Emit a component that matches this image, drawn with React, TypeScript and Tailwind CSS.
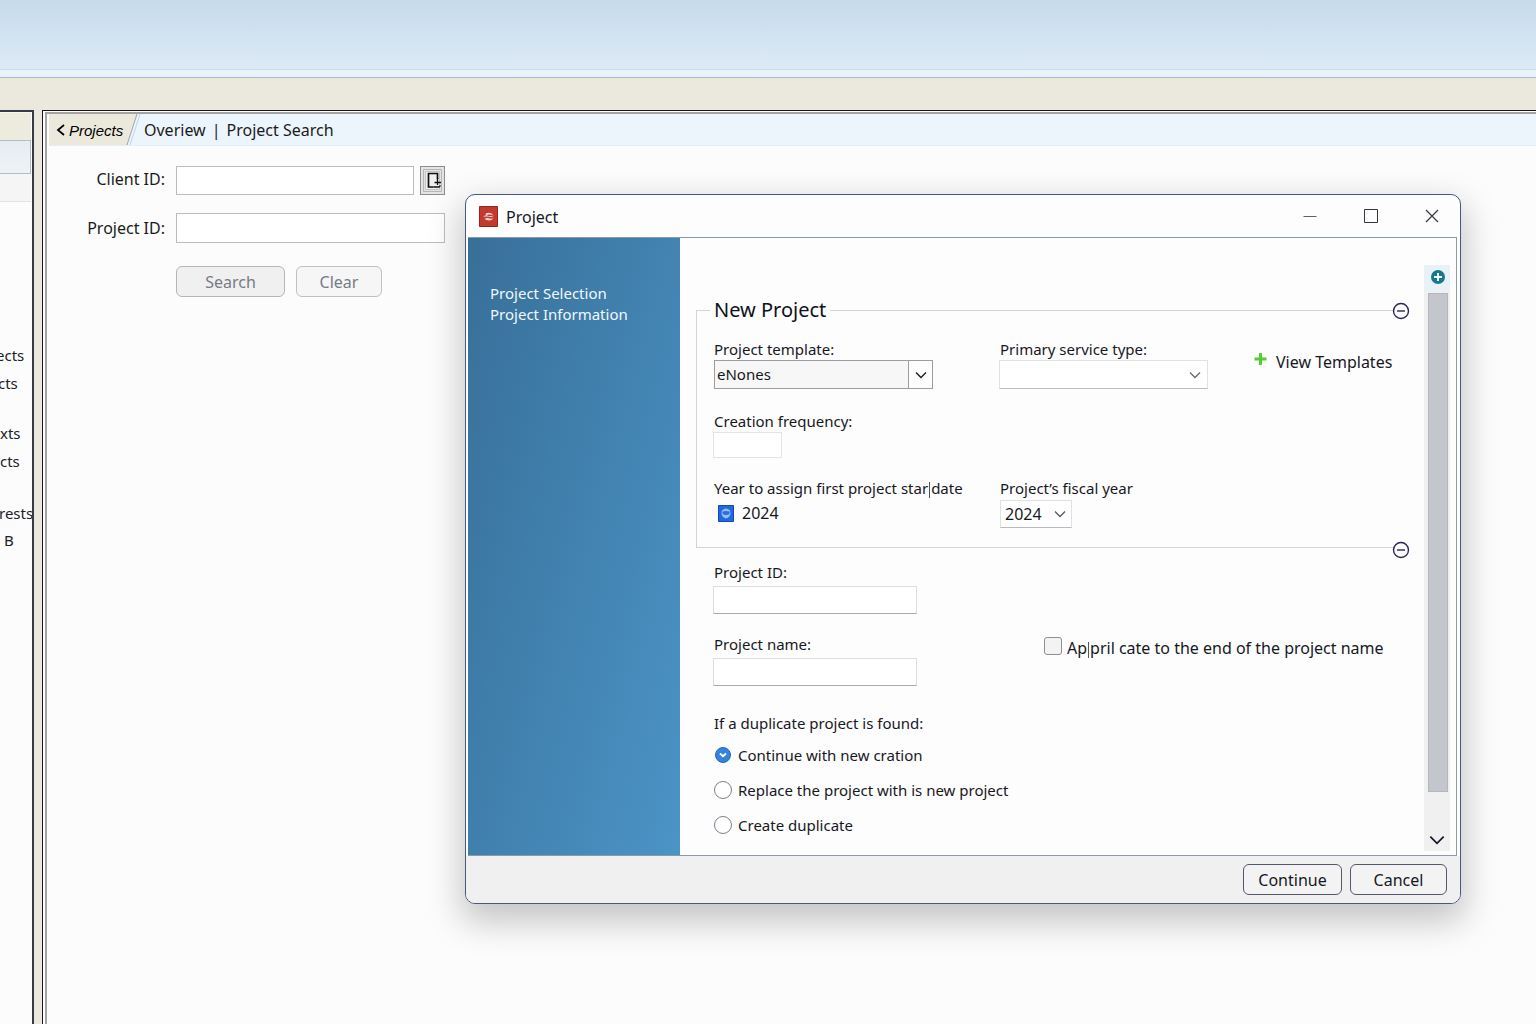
import { useState } from "react";
import type { ReactNode } from "react";

function Chevron({ className, size = 12 }: { className: string; size?: number }) {
  return (
    <svg className={className} width={size} height={size} viewBox="0 0 12 12" fill="none" stroke="currentColor" strokeWidth="1.3" aria-hidden="true">
      <path d="M1 3.5 6 8.500 11 3.500" />
    </svg>
  );
}

const sideItems = [
  { text: "ects", cls: "mt-[143px] -ml-1" },
  { text: "cts", cls: "mt-2 -ml-0.5" },
  { text: "xts", cls: "mt-[30px]" },
  { text: "cts", cls: "mt-2" },
  { text: "rests", cls: "mt-8 -ml-px" },
  { text: "B", cls: "mt-[7px] ml-1" },
];

function SidePanel() {
  return (
    <aside className="flex w-[34px] shrink-0 flex-col overflow-hidden border-t-2 border-r-2 border-[#363b45] bg-[#fcfcfc]">
      <div className="mr-px h-7 shrink-0 border-t border-[#f8f7ee] bg-[#ecebde]" />
      <div className="mr-px h-[34px] shrink-0 border border-l-0 border-[#b3bdc6] bg-linear-to-b from-[#e6edf2] to-[#edf2f6]" />
      <div className="mr-px h-7 shrink-0 border-b border-[#e2e3e5] bg-[#f5f5f6]" />
      <ul className="text-[15px] text-[#20222a]">
        {sideItems.map((item, i) => (
          <li key={i} className={item.cls + " h-5 whitespace-nowrap leading-5"}>
            {item.text}
          </li>
        ))}
      </ul>
    </aside>
  );
}

function SearchPanel() {
  return (
    <main className="min-w-0 flex-1 border-t border-l border-[#16181d] bg-white pt-px pl-0.5">
      <div className="h-full border-t-2 border-l-2 border-[#a3a3a6] bg-[#fcfcfc] pl-0.5">
        <nav className="flex h-8 border-b border-[#e3eff7] bg-[#edf5fc]">
          <a href="#projects" className="relative flex w-[92px] items-center pl-1 text-black">
            <svg className="absolute inset-0 h-full w-full" viewBox="0 0 92 32" preserveAspectRatio="none" aria-hidden="true">
              <path d="M0 0H88L78 32H0Z" fill="#ebe9db" />
              <path d="M88 0 78 32" stroke="#9aa3ab" strokeWidth="1" />
              <path d="M91 0 81 32" stroke="#bcd3ea" strokeWidth="1" />
            </svg>
            <svg className="relative mt-px mr-1 ml-[3px]" width="9" height="12" viewBox="0 0 9 12" fill="none" stroke="#000" strokeWidth="1.8" aria-hidden="true">
              <path d="M8 1 2 6l6 5" />
            </svg>
            <span className="relative pt-1 font-['Liberation_Sans',sans-serif] text-[15px] italic">Projects</span>
          </a>
          <a href="#overview" className="ml-[3px] flex items-center text-[#1a1b20]">Overiew</a>
          <span className="mx-1.5 flex items-center text-[#1a1b20]">|</span>
          <a href="#search" className="flex items-center text-[#1a1b20]">Project Search</a>
        </nav>
        <form className="grid w-[396px] grid-cols-[117px_1fr] gap-x-2.5 pt-5 text-[#1a1b20]" onSubmit={(e) => e.preventDefault()}>
          <label htmlFor="client" className="mr-px text-right leading-[27px]">Client ID:</label>
          <div className="flex min-w-0 gap-1.5">
            <input id="client" type="text" className="h-[29px] min-w-0 flex-1 border border-[#bcbcbe] bg-white px-2" />
            <button type="button" aria-label="Look up client" className="flex h-[29px] w-[25px] items-center justify-center border border-[#8d8d8f] bg-[#e4e4e4] p-0.5">
              <svg width="19" height="23" viewBox="0 0 19 23" fill="none" aria-hidden="true">
                <path d="M.5.5h18v22H.5z" stroke="#b5b5b6" />
                <path d="M2.5 2.5h14v18h-14z" stroke="#c4c4c5" fill="#f1f1f1" />
                <path d="M14.500 10V4.500h-9v13.500h5" stroke="#111" strokeWidth="1.700" />
                <path d="M14.500 9v7M11.500 13.500h6.500M10.500 18h5.500l1.500-1.500" stroke="#111" strokeWidth="1.300" />
              </svg>
            </button>
          </div>
          <label htmlFor="pid" className="mt-[18px] mr-px text-right leading-[30px]">Project ID:</label>
          <input id="pid" type="text" className="mt-[18px] h-[30px] w-full min-w-0 border border-[#bcbcbe] bg-white px-2" />
          <div className="col-start-2 mt-[23px] flex gap-[11px] text-[#777b84]">
            <button type="submit" className="h-[31px] w-[109px] rounded-md border border-[#b4b5b8] bg-[#f0f0f0]">Search</button>
            <button type="reset" className="h-[31px] w-[86px] rounded-md border border-[#bfc0c3] bg-[#f6f6f6]">Clear</button>
          </div>
        </form>
      </div>
    </main>
  );
}

function Field({ id, label, className = "", children }: { id: string; label: string; className?: string; children: ReactNode }) {
  return (
    <div className={className}>
      <label htmlFor={id} className="block leading-5">{label}</label>
      {children}
    </div>
  );
}

function Collapse({ className }: { className: string }) {
  return (
    <button type="button" aria-label="Collapse section" className={className + " absolute right-[-17px] h-[18px] w-[18px]"}>
      <svg width="18" height="18" viewBox="0 0 18 18" fill="none" stroke="#2b2456" strokeWidth="1.400" aria-hidden="true">
        <circle cx="9" cy="9" r="7.500" />
        <path d="M5 9h8" />
      </svg>
    </button>
  );
}

function Caret() {
  return <span className="mx-px inline-block h-4 w-px bg-[#55565c] align-middle" />;
}

const duplicateChoices = ["Continue with new cration", "Replace the project with is new project", "Create duplicate"];

function ProjectDialog() {
  const [choice, setChoice] = useState(0);
  const lineField = "block border border-[#dcdde0] bg-white px-2";
  return (
    <section
      role="dialog"
      aria-label="Project"
      className="absolute top-[194px] right-[75px] left-[465px] overflow-hidden rounded-[10px] border border-[#46597f] bg-[#fdfdfd] text-[15px] text-[#17181d] shadow-[0_14px_34px_4px_rgba(0,0,0,0.22)]"
    >
      <header className="flex h-[42px] items-center pl-[13px]">
        <svg width="19" height="21" viewBox="0 0 19 21" aria-hidden="true">
          <path d="M.5.5h18v20H.5z" fill="#c13a2f" stroke="#9f211b" />
          <path d="M6.500 7.800Q9.500 5.500 13 7.800l1 1.200-4-.5-3 .8Z M4 10.800q2-2.200 4.500-1.200t6.500 0q-1.500 2-4.500 1.200T4 10.800Z M5.500 12.800q2.500-1.400 4.500-.5t4.500-.3q-1.500 2.600-4.500 2.600t-4.500-1.800Z" fill="#f6d3ce" />
        </svg>
        <h1 className="ml-2 flex-1 pt-0.5 text-base">Project</h1>
        <button type="button" aria-label="Minimize" className="flex w-[61px] justify-center">
          <svg width="14" height="14" viewBox="0 0 14 14" stroke="#5e6069" aria-hidden="true"><path d="M.5 7.500h13" /></svg>
        </button>
        <button type="button" aria-label="Maximize" className="flex w-[61px] justify-center">
          <svg width="14" height="14" viewBox="0 0 14 14" fill="none" stroke="#33353f" aria-hidden="true"><path d="M.5.5h13v13H.5z" /></svg>
        </button>
        <button type="button" aria-label="Close" className="mr-[-2px] flex w-[61px] justify-center">
          <svg width="14" height="14" viewBox="0 0 14 14" stroke="#33353f" strokeWidth="1.200" aria-hidden="true"><path d="m1 1 12 12M13 1 1 13" /></svg>
        </button>
      </header>

      <div className="mr-[3px] ml-0.5 flex border-t border-r border-b border-[#8e99a8]">
        <nav className="w-[212px] shrink-0 bg-linear-[105deg] from-[#386f99] to-[#4b94c6] pt-[45px] pl-[22px] text-[#f2f8fd]">
          <a href="#selection" className="block leading-[21px]">Project Selection</a>
          <a href="#information" className="block leading-[21px]">Project Information</a>
        </nav>

        <form className="min-w-0 flex-1 pt-[58px] pr-[31px] pb-5 pl-4" onSubmit={(e) => e.preventDefault()}>
          <fieldset className="relative border border-r-0 border-[#d3d4d8] pr-0 pb-[19px] pl-[13px]">
            <legend className="px-1 text-xl leading-7 text-[#0f1120]">New Project</legend>
            <Collapse className="top-[-22px]" />
            <Collapse className="bottom-[-12px]" />
            <div className="ml-1 grid grid-cols-[286px_254px_1fr] pt-[15px]">
              <Field id="template" label="Project template:">
                <div className="relative mt-px w-[219px]">
                  <select id="template" className="block h-[29px] w-full appearance-none border border-[#9c9da1] bg-[#f7f7f7] pl-0.5">
                    <option>eNones</option>
                  </select>
                  <span className="pointer-events-none absolute inset-y-px right-px flex w-6 items-center justify-center border-l border-[#9c9da1] bg-[#fdfdfd]">
                    <Chevron className="text-[#17181d]" />
                  </span>
                </div>
              </Field>
              <Field id="service" label="Primary service type:">
                <div className="relative mt-px -ml-px w-[209px]">
                  <select id="service" className="block h-[29px] w-full appearance-none border border-[#e0e1e3] border-b-[#bdbec2] bg-white">
                    <option />
                  </select>
                  <Chevron className="pointer-events-none absolute top-[9px] right-[7px] text-[#686a72]" />
                </div>
              </Field>
              <button type="button" className="mt-[9px] flex h-7 items-center gap-2 self-start text-base">
                <svg width="14" height="14" viewBox="0 0 14 14" className="mb-1.5" aria-hidden="true"><path d="M6.500 1v12M.5 7h12" stroke="#54cf31" strokeWidth="3" /></svg>
                View Templates
              </button>
            </div>
            <Field id="frequency" label="Creation frequency:" className="mt-[22px] ml-1">
              <input id="frequency" type="text" className="mt-px -ml-px block h-[26px] w-[69px] border border-[#e4e4e7] bg-white px-1" />
            </Field>
            <div className="mt-5 ml-1 grid grid-cols-[286px_1fr]">
              <div>
                <p className="h-5 leading-5">Year to assign first project star<Caret />date</p>
                <div className="mt-[3px] ml-1 flex h-6 items-center gap-2 text-base">
                  <svg width="16" height="17" viewBox="0 0 16 17" aria-hidden="true">
                    <path d="M.5.5h15v16H.5z" fill="#2468df" stroke="#1549ae" />
                    <path d="M4 5.500Q8 1.500 12 5.500l.5 3Q12 12.500 8 13.500 4 12.500 3.500 8.500Z" fill="#8fc2fb" />
                    <path d="M4.500 6.500Q8 5.500 11.500 6.500v2.500q-3.500 2-7 0Z" fill="#2b6fdc" />
                  </svg>
                  <span>2024</span>
                </div>
              </div>
              <Field id="fiscal" label="Project’s fiscal year">
                <div className="relative mt-0.5 w-[72px]">
                  <select id="fiscal" className="block h-7 w-full appearance-none border border-[#e0e1e3] border-b-[#b9babf] bg-white pl-1 text-base">
                    <option>2024</option>
                  </select>
                  <Chevron className="pointer-events-none absolute top-2 right-1.5 text-[#555862]" />
                </div>
              </Field>
            </div>
          </fieldset>

          <div className="mt-3.5 ml-[18px] grid grid-cols-[330px_1fr]">
            <Field id="project-id" label="Project ID:" className="col-span-2">
              <input id="project-id" type="text" className={lineField + " mt-1 -ml-px h-7 w-[204px] border-b-[#a9aaae]"} />
            </Field>
            <Field id="project-name" label="Project name:" className="mt-5">
              <input id="project-name" type="text" className={lineField + " mt-1 -ml-px h-7 w-[204px] border-b-[#a9aaae]"} />
            </Field>
            <label className="mt-[22px] flex h-5 items-center gap-[5px] text-base whitespace-nowrap">
              <input type="checkbox" className="h-[18px] w-[18px] shrink-0 appearance-none rounded-[3px] border border-[#8f9096] bg-[#f3f3f3]" />
              <span className="pt-1">Ap<Caret />pril cate to the end of the project name</span>
            </label>
          </div>

          <div role="radiogroup" aria-labelledby="duplicate" className="mt-[27px] ml-[18px]">
            <p id="duplicate" className="leading-5">If a duplicate project is found:</p>
            <div className="mt-3 flex flex-col gap-[15px]">
              {duplicateChoices.map((text, i) => (
                <label key={text} className="flex h-5 items-center gap-1.5">
                  <span className="relative flex h-[18px] w-[18px]">
                    <input
                      type="radio"
                      name="duplicate"
                      checked={choice === i}
                      onChange={() => setChoice(i)}
                      className="h-[18px] w-[18px] appearance-none rounded-full border border-[#7d7f8c] bg-white checked:m-px checked:h-4 checked:w-4 checked:border-[#2467b5] checked:bg-[#3583dc]"
                    />
                    {choice === i && (
                      <svg className="pointer-events-none absolute inset-0" width="18" height="18" viewBox="0 0 18 18" fill="none" stroke="#fff" strokeWidth="1.800" aria-hidden="true">
                        <path d="m6 7.500 3 2.700 3-2.700" />
                      </svg>
                    )}
                  </span>
                  {text}
                </label>
              ))}
            </div>
          </div>
        </form>

        <div className="mt-[27px] mr-1.5 mb-1 flex w-[26px] shrink-0 flex-col items-center bg-[#f0f0f1]">
          <button type="button" aria-label="Scroll up" className="flex h-[26px] w-full items-center justify-center bg-[#e8f1f6]">
            <svg width="14" height="14" viewBox="0 0 14 14" className="mb-0.5 ml-0.5" aria-hidden="true">
              <circle cx="7" cy="7" r="7" fill="#15788f" />
              <path d="M7 3v8M3 7h8" stroke="#fff" strokeWidth="1.800" />
            </svg>
          </button>
          <div className="mt-0.5 ml-px w-5 flex-1 border border-[#b3b6bd] bg-[#c3c6cd]" />
          <button type="button" aria-label="Scroll down" className="mt-9 flex h-[23px] w-full items-center justify-center">
            <Chevron className="text-[#14172b]" size={16} />
          </button>
        </div>
      </div>

      <footer className="flex h-[47px] items-center justify-end gap-2 bg-[#f0f0f0] pr-[13px] text-base">
        <button type="button" className="h-[31px] w-[99px] rounded-md border border-[#54586d] bg-[#f3f3f3]">Continue</button>
        <button type="button" className="h-[31px] w-[97px] rounded-md border border-[#54586d] bg-[#f3f3f3]">Cancel</button>
      </footer>
    </section>
  );
}

export default function App() {
  return (
    <div className="relative flex min-h-screen flex-col overflow-hidden bg-[#ebe9de] font-['Noto_Sans','Open_Sans',sans-serif] text-base">
      <div className="flex h-[78px] shrink-0 flex-col border-b border-[#a3bbe0] bg-linear-to-b from-[#c6dbeb] to-[#dfecf6]">
        <div className="mt-auto h-2 border-t border-[#c9dcea] bg-[#e8f3fb]" />
      </div>
      <div className="h-8 shrink-0 bg-[#ebe9de]" />
      <div className="flex flex-1">
        <SidePanel />
        <div className="w-2 shrink-0" />
        <SearchPanel />
      </div>
      <ProjectDialog />
    </div>
  );
}
